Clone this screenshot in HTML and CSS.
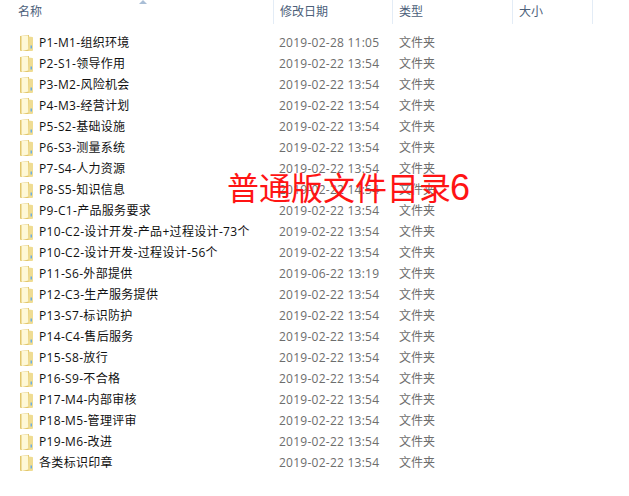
FILE: index.html
```html
<!DOCTYPE html>
<html lang="zh-CN">

<head>
    <meta charset="UTF-8" />
    <title>普通版文件目录6</title>
    <link rel="stylesheet" href="styles.css">
</head>

<body>
    <div class="header">
        <div class="col col-name">名称<span class="sort-arrow"></span></div>
        <div class="col col-date">修改日期</div>
        <div class="col col-type">类型</div>
        <div class="col col-size">大小</div>
    </div>

    <div class="rows" id="rows"></div>

    <div class="stamp">普通版文件目录<span class="stamp-num">6</span></div>

    <script src="rows.js"></script>
</body>

</html>
```

FILE: styles.css
```css
body {
    position: relative;
    margin: 0;
    width: 629px;
    height: 496px;
    overflow: hidden;
    background: #fff;
    font-family: "Open Sans", "Noto Sans CJK SC", sans-serif;
    font-size: 12px;
}

.header {
    display: flex;
    height: 24px;
    padding-left: 18px;
    color: #4c607a;
    line-height: 24px;
}

.col {
    position: relative;
    flex: none;
    box-sizing: border-box;
    height: 24px;
}

.col-name {
    width: 255px;
}

.col-date {
    width: 119px;
    padding-left: 6px;
    border-left: 1px solid #e3ecf6;
}

.col-type {
    width: 120px;
    padding-left: 6px;
    border-left: 1px solid #e3ecf6;
}

.col-size {
    width: 81px;
    padding-left: 6px;
    border-left: 1px solid #e3ecf6;
    border-right: 1px solid #e3ecf6;
}

.sort-arrow {
    position: absolute;
    left: 121px;
    top: 0;
    border-left: 4px solid transparent;
    border-right: 4px solid transparent;
    border-bottom: 4px solid #a9bed6;
}

.rows {
    padding-top: 8px;
}

.row {
    display: flex;
    align-items: center;
    height: 21px;
    line-height: 21px;
}

.row-icon {
    flex: none;
    width: 13px;
    height: 16px;
    margin-left: 20px;
    margin-right: 6px;
}

.row-name {
    flex: none;
    width: 240px;
    color: #111;
    letter-spacing: .32px;
    white-space: nowrap;
}

.row-date {
    flex: none;
    width: 120px;
    color: #6d6d6d;
    letter-spacing: .25px;
}

.row-type {
    color: #6d6d6d;
}

.stamp {
    position: absolute;
    left: 227px;
    top: 168px;
    color: #ff1414;
    font-family: "Liberation Sans", "Noto Sans CJK SC", sans-serif;
    font-size: 32px;
    line-height: 40px;
    white-space: nowrap;
}

.stamp-num {
    font-size: 36px;
    margin-left: -1px;
}
```

FILE: rows.js
```js
const folders = [
    ["P1-M1-组织环境", "2019-02-28 11:05"],
    ["P2-S1-领导作用", "2019-02-22 13:54"],
    ["P3-M2-风险机会", "2019-02-22 13:54"],
    ["P4-M3-经营计划", "2019-02-22 13:54"],
    ["P5-S2-基础设施", "2019-02-22 13:54"],
    ["P6-S3-测量系统", "2019-02-22 13:54"],
    ["P7-S4-人力资源", "2019-02-22 13:54"],
    ["P8-S5-知识信息", "2019-02-22 14:54"],
    ["P9-C1-产品服务要求", "2019-02-22 13:54"],
    ["P10-C2-设计开发-产品+过程设计-73个", "2019-02-22 13:54"],
    ["P10-C2-设计开发-过程设计-56个", "2019-02-22 13:54"],
    ["P11-S6-外部提供", "2019-06-22 13:19"],
    ["P12-C3-生产服务提供", "2019-02-22 13:54"],
    ["P13-S7-标识防护", "2019-02-22 13:54"],
    ["P14-C4-售后服务", "2019-02-22 13:54"],
    ["P15-S8-放行", "2019-02-22 13:54"],
    ["P16-S9-不合格", "2019-02-22 13:54"],
    ["P17-M4-内部审核", "2019-02-22 13:54"],
    ["P18-M5-管理评审", "2019-02-22 13:54"],
    ["P19-M6-改进", "2019-02-22 13:54"],
    ["各类标识印章", "2019-02-22 13:54"]
];

const folderIcon = `
    <svg class="row-icon" viewBox="0 0 13 16">
        <path d="M0 1 L9 0 L9 16 L1 16 Q0 16 0 15 Z" fill="#e2c76d"/>
        <path d="M1.5 1 L8 .5 L8.5 14.5 L2 16 L1.5 15 Z" fill="#fef8d6"/>
        <path d="M8.5 1.5 L12.5 2 Q13 2 13 3 L13 15 Q13 16 12 16 L8.5 16 Z" fill="#efdc92"/>
        <rect x="10.5" y="10.5" width="1.5" height="3" fill="#6aaee4"/>
    </svg>`;

document.getElementById("rows").innerHTML = folders.map(f => `
    <div class="row">
        ${folderIcon}
        <span class="row-name">${f[0]}</span>
        <span class="row-date">${f[1]}</span>
        <span class="row-type">文件夹</span>
    </div>`).join("");
```
